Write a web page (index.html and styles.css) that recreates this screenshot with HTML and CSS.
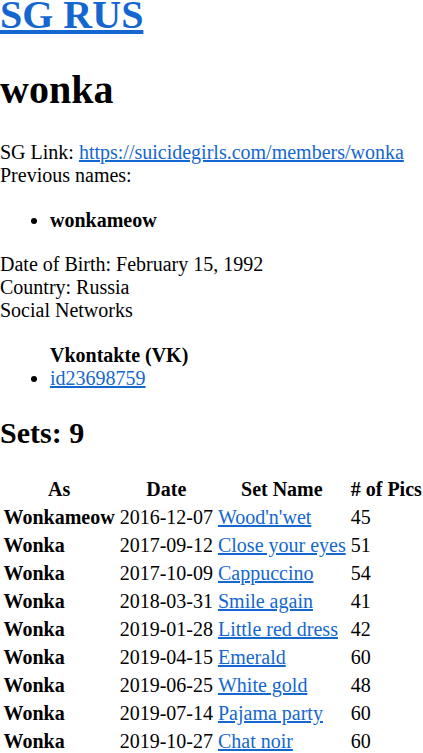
FILE: index.html
```html
<!DOCTYPE html>
<html lang="en">
<head>
  <meta charset="UTF-8" />
  <meta name="viewport" content="width=device-width, initial-scale=1" />
  <title>wonka - SG RUS</title>
  <link rel="stylesheet" href="styles.css">
</head>
<body>

  <h1 class="site-title"><a href="#">SG RUS</a></h1>

  <h1 class="model-name">wonka</h1>

  <div class="profile">
    SG Link: <a href="#">https://suicidegirls.com/members/wonka</a><br>
    Previous names:
    <ul>
      <li><b>wonkameow</b></li>
    </ul>
    Date of Birth: February 15, 1992<br>
    Country: Russia<br>
    Social Networks
    <ul>
      <li class="network-name">Vkontakte (VK)</li>
      <li><a href="#">id23698759</a></li>
    </ul>
  </div>

  <h2>Sets: 9</h2>

  <table class="sets">
    <thead>
      <tr>
        <th>As</th><th>Date</th><th>Set Name</th><th># of Pics</th>
      </tr>
    </thead>
    <tbody>
      <tr><th>Wonkameow</th><td>2016-12-07</td><td><a href="#">Wood'n'wet</a></td><td>45</td></tr>
      <tr><th>Wonka</th><td>2017-09-12</td><td><a href="#">Close your eyes</a></td><td>51</td></tr>
      <tr><th>Wonka</th><td>2017-10-09</td><td><a href="#">Cappuccino</a></td><td>54</td></tr>
      <tr><th>Wonka</th><td>2018-03-31</td><td><a href="#">Smile again</a></td><td>41</td></tr>
      <tr><th>Wonka</th><td>2019-01-28</td><td><a href="#">Little red dress</a></td><td>42</td></tr>
      <tr><th>Wonka</th><td>2019-04-15</td><td><a href="#">Emerald</a></td><td>60</td></tr>
      <tr><th>Wonka</th><td>2019-06-25</td><td><a href="#">White gold</a></td><td>48</td></tr>
      <tr><th>Wonka</th><td>2019-07-14</td><td><a href="#">Pajama party</a></td><td>60</td></tr>
      <tr><th>Wonka</th><td>2019-10-27</td><td><a href="#">Chat noir</a></td><td>60</td></tr>
    </tbody>
  </table>

</body>
</html>
```

FILE: styles.css
```css
html {
  font-size: 20px;
}
body {
  font-family: "Liberation Serif", "Times New Roman", serif;
  font-size: 20px;
  line-height: 23px;
  margin: 0;
  color: #000;
}
a {
  color: #1467d0;
}
h1 {
  font-size: 40px;
  line-height: 46px;
  margin: 26.8px 0;
}
h1.site-title {
  margin: -8px 0 29px;
}
h1.model-name {
  margin-bottom: 28px;
}
h2 {
  font-size: 30px;
  line-height: 34.5px;
  margin: 26px 0 24.5px;
}
ul {
  margin: 21.5px 0;
  padding-left: 50px;
}
.network-name {
  list-style: none;
  font-weight: bold;
}
table.sets {
  border-spacing: 2px;
  white-space: nowrap;
}
table.sets th, table.sets td {
  padding: 1.5px;
}
table.sets tbody th {
  text-align: left;
}
table.sets td {
  text-align: left;
}
```
